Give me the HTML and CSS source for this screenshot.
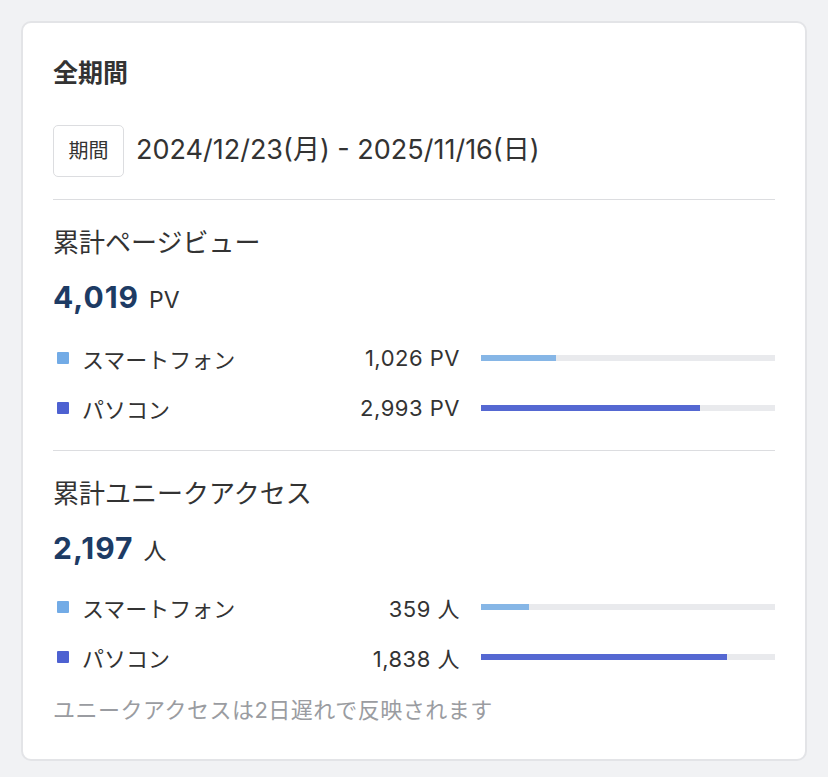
FILE: index.html
```html
<!DOCTYPE html>
<html lang="ja">
<head>
    <meta charset="UTF-8">
    <meta name="viewport" content="width=device-width, initial-scale=1.0">
    <title>全期間</title>
    <link rel="stylesheet" href="styles.css">
</head>
<body>
    <div class="card">
        <h2 class="card-title">全期間</h2>

        <div class="period-row">
            <span class="period-badge">期間</span>
            <span class="period-date">2024/12/23(月) - 2025/11/16(日)</span>
        </div>

        <!-- 累計ページビュー -->
        <div class="stat-section">
            <h3 class="stat-heading">累計ページビュー</h3>
            <p class="stat-total"><span class="total-num">4,019</span> <span class="total-unit">PV</span></p>
            <ul class="device-list">
                <li class="device-row">
                    <span class="device-mark mark-phone"></span>
                    <span class="device-name">スマートフォン</span>
                    <span class="device-value">1,026 PV</span>
                    <span class="bar-track"><span class="bar-fill fill-phone" style="width: 25.5%"></span></span>
                </li>
                <li class="device-row">
                    <span class="device-mark mark-pc"></span>
                    <span class="device-name">パソコン</span>
                    <span class="device-value">2,993 PV</span>
                    <span class="bar-track"><span class="bar-fill fill-pc" style="width: 74.5%"></span></span>
                </li>
            </ul>
        </div>

        <!-- 累計ユニークアクセス -->
        <div class="stat-section last-section">
            <h3 class="stat-heading">累計ユニークアクセス</h3>
            <p class="stat-total"><span class="total-num">2,197</span> <span class="total-unit">人</span></p>
            <ul class="device-list">
                <li class="device-row">
                    <span class="device-mark mark-phone"></span>
                    <span class="device-name">スマートフォン</span>
                    <span class="device-value">359 人</span>
                    <span class="bar-track"><span class="bar-fill fill-phone" style="width: 16.3%"></span></span>
                </li>
                <li class="device-row">
                    <span class="device-mark mark-pc"></span>
                    <span class="device-name">パソコン</span>
                    <span class="device-value">1,838 人</span>
                    <span class="bar-track"><span class="bar-fill fill-pc" style="width: 83.7%"></span></span>
                </li>
            </ul>
            <p class="stat-note">ユニークアクセスは2日遅れで反映されます</p>
        </div>
    </div>
</body>
</html>
```

FILE: styles.css
```css
* {
    margin: 0;
    padding: 0;
    box-sizing: border-box;
}

body {
    background-color: #f1f2f4;
    padding: 21px;
    font-family: 'Inter', 'Noto Sans CJK JP', sans-serif;
    color: #333;
}

.card {
    background-color: #fff;
    border: 2px solid #e3e4e7;
    border-radius: 10px;
    padding: 34px 30px 35px;
}

.card-title {
    font-size: 25px;
    font-weight: 700;
    line-height: 32px;
    margin-bottom: 36px;
}

.period-row {
    display: flex;
    align-items: center;
    height: 52px;
}

.period-badge {
    display: inline-block;
    width: 71px;
    height: 52px;
    line-height: 50px;
    text-align: center;
    border: 1px solid #dcdde0;
    border-radius: 5px;
    font-size: 20px;
}

.period-date {
    margin-left: 12px;
    padding-bottom: 7px;
    font-size: 27px;
}

.stat-section {
    border-top: 1px solid #dcdde0;
    margin-top: 22px;
    padding-top: 25px;
    padding-bottom: 5px;
}

.last-section {
    margin-top: 22px;
    padding-bottom: 0;
}

.stat-heading {
    font-size: 26px;
    font-weight: 400;
    line-height: 36px;
}

.stat-total {
    display: flex;
    align-items: baseline;
    height: 40px;
    margin-top: 16px;
    line-height: 40px;
}

.total-num {
    font-size: 30px;
    font-weight: 700;
    color: #1d3b64;
    letter-spacing: 1px;
}

.total-unit {
    font-size: 23px;
    margin-left: 10px;
}

.device-list {
    list-style: none;
    margin-top: 26px;
}

.last-section .device-list {
    margin-top: 24px;
}

.device-row {
    display: flex;
    align-items: center;
    height: 30px;
    margin-bottom: 20px;
    font-size: 22px;
}

.device-row:last-child {
    margin-bottom: 0;
}

.device-mark {
    width: 12px;
    height: 12px;
    margin-left: 4px;
    margin-right: 13px;
    border-radius: 1px;
}

.mark-phone {
    background-color: #72abe6;
}

.mark-pc {
    background-color: #4d61d1;
}

.device-name {
    flex: 1;
}

.device-value {
    text-align: right;
    letter-spacing: 0.5px;
}

.bar-track {
    width: 294px;
    height: 6px;
    margin-left: 21px;
    background-color: #e9eaed;
}

.bar-fill {
    display: block;
    height: 100%;
}

.fill-phone {
    background-color: #86b6e6;
}

.fill-pc {
    background-color: #5568d2;
}

.stat-note {
    margin-top: 24px;
    line-height: 28px;
    font-size: 22px;
    letter-spacing: 0.5px;
    color: #9a9ca1;
}
```
